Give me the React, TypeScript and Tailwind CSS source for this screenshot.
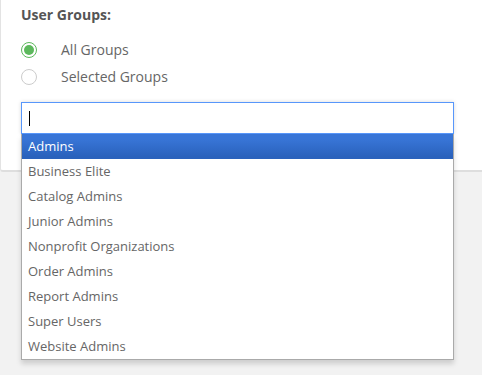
import React from 'react';

const groups = [
  'Admins',
  'Business Elite',
  'Catalog Admins',
  'Junior Admins',
  'Nonprofit Organizations',
  'Order Admins',
  'Report Admins',
  'Super Users',
  'Website Admins',
];

function Radio({ checked, label }: { checked?: boolean; label: string }) {
  return (
    <label className="flex items-center h-[27px] gap-6 text-[14px] text-[#666]">
      {checked ? (
        <span className="w-4 h-4 rounded-full border border-[#5cb85c] flex items-center justify-center">
          <span className="w-[10px] h-[10px] rounded-full bg-[#5cb85c]" />
        </span>
      ) : (
        <span className="w-4 h-4 rounded-full border border-[#ccc] bg-white" />
      )}
      {label}
    </label>
  );
}

export default function App() {
  return (
    <div className="min-h-screen bg-[#f2f2f2] overflow-hidden" style={{ fontFamily: '"Open Sans", sans-serif' }}>
      <div className="bg-white border-l border-[#e3e3e3] border-b-2 border-b-[#dedede] rounded-bl-[3px] pt-[6px] pl-[20px] pb-[36px]">
        <div className="text-[14px] font-bold text-[#555] leading-[18px]">User Groups:</div>
        <div className="mt-[12px]">
          <Radio checked label="All Groups" />
          <Radio label="Selected Groups" />
        </div>
        <div className="relative mt-[12px] w-[433px]">
          <div className="h-[32px] border border-[#5897fb] bg-white flex items-center shadow-[0_0_4px_rgba(0,0,0,0.15)]">
            <span className="ml-[7px] w-px h-[15px] bg-black" />
          </div>
          <ul className="absolute left-0 top-full w-full bg-white border border-t-0 border-[#aaa] shadow-[0_4px_5px_rgba(0,0,0,0.15)] z-10">
            {groups.map((g, i) => (
              <li
                key={g}
                className={
                  i === 0
                    ? 'px-[6px] py-[5px] leading-[15px] text-[13px] text-white bg-[linear-gradient(#3875d7_20%,#2a62bc_90%)]'
                    : 'px-[6px] py-[5px] leading-[15px] text-[13px] text-[#666]'
                }
              >
                {g}
              </li>
            ))}
          </ul>
        </div>
      </div>
    </div>
  );
}
